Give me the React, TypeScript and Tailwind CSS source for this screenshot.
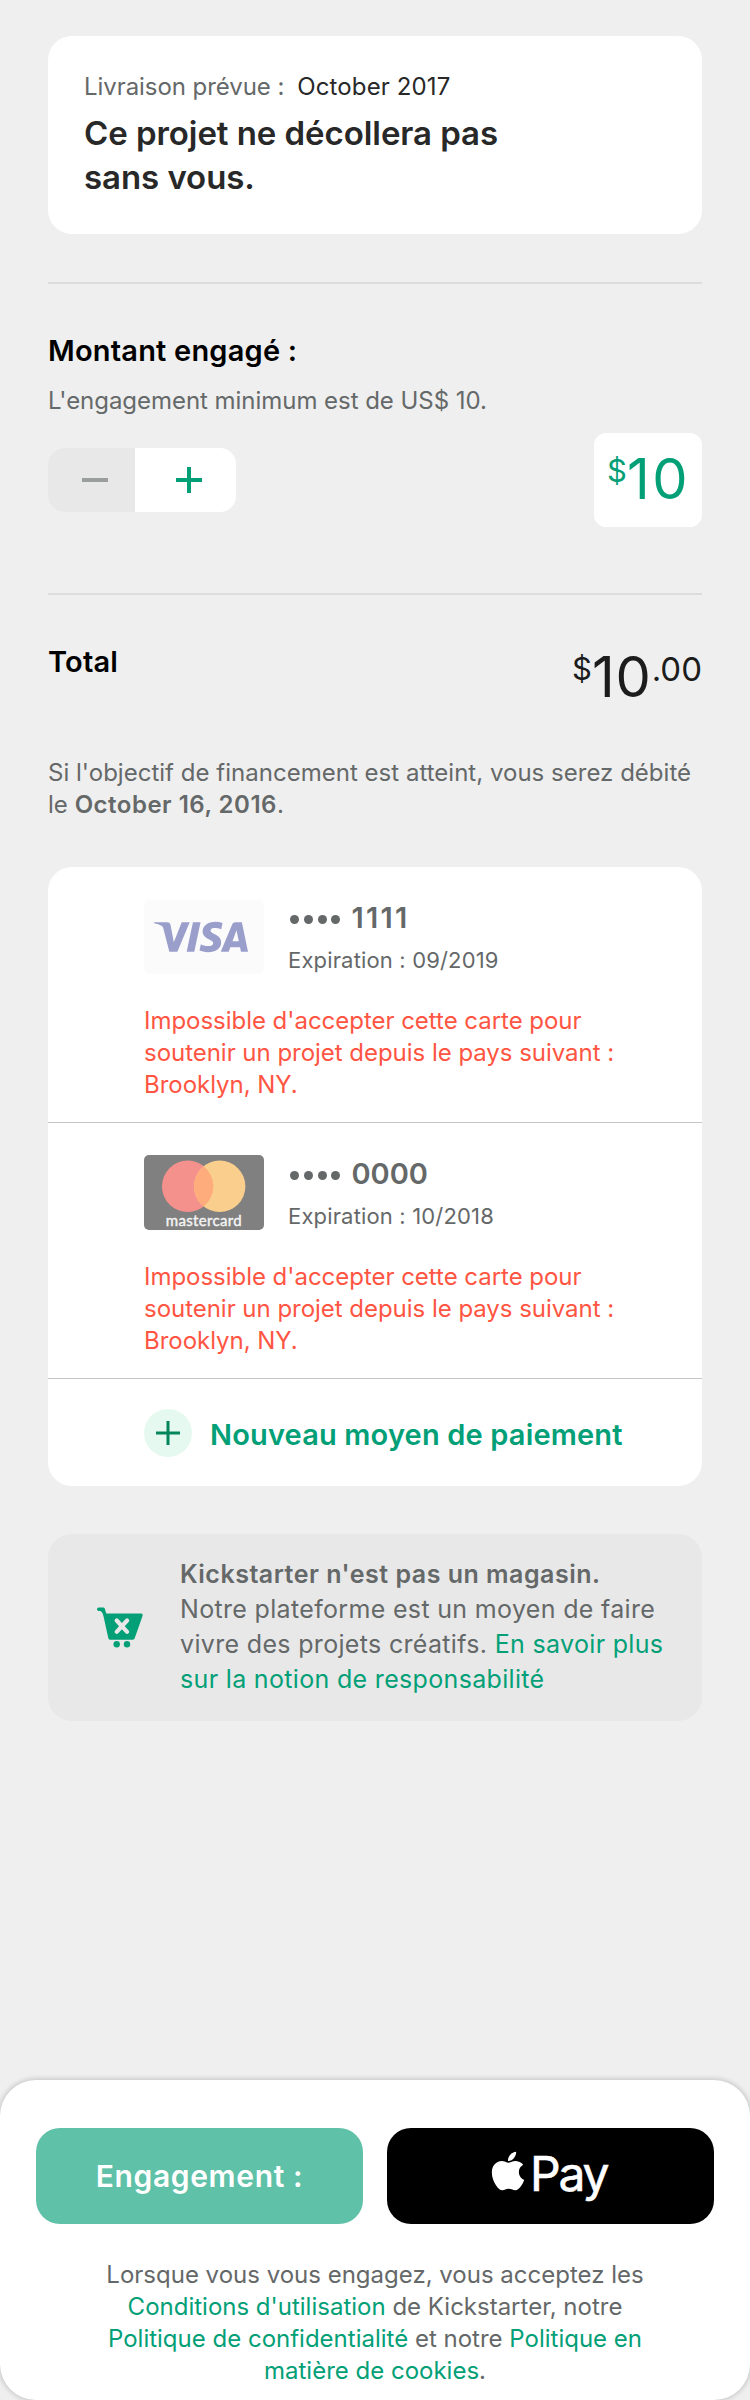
import type { ReactNode } from "react";
import { FaApple } from "react-icons/fa";
import { SiVisa } from "react-icons/si";

function VisaBadge() {
  return (
    <div className="mt-px flex h-[74px] w-[120px] items-center rounded-md bg-[#fbfbfb] pl-[10px]">
      <SiVisa className="size-[94px] text-[#9a9ecb]" />
    </div>
  );
}

function MastercardBadge() {
  return (
    <svg className="h-[75px] w-[120px]" viewBox="0 0 120 75">
      <rect width="120" height="75" rx="5" fill="#808080" />
      <circle cx="43.7" cy="31.3" r="25.7" fill="#f5918d" />
      <circle cx="75.7" cy="31.3" r="25.7" fill="#facf8d" />
      <path d="M59.7 11.2a25.7 25.7 0 0 1 0 40.2a25.7 25.7 0 0 1 0-40.2z" fill="#ffac7d" />
      <text
        x="21.7"
        y="70.5"
        textLength="76"
        fill="#f4f4f4"
        stroke="#f4f4f4"
        strokeWidth="0.4"
        className="font-['Lato',sans-serif] text-[15px]"
      >
        mastercard
      </text>
    </svg>
  );
}

function CartIcon() {
  return (
    <svg className="h-[42px] w-[48px]" viewBox="0 0 48 42" fill="none">
      <path
        d="M2.7 3.3H7.2L9 9.2L14 32H37L45 9.2H9"
        fill="#03a077"
        stroke="#03a077"
        strokeWidth="3.4"
        strokeLinejoin="round"
        strokeLinecap="round"
      />
      <path d="M20.7 14.5l10.4 11.3M31.1 14.5l-10.4 11.3" stroke="#e8e8e8" strokeWidth="4.2" strokeLinecap="round" />
      <circle cx="20.7" cy="38.3" r="3.2" fill="#03a077" />
      <circle cx="31" cy="38.3" r="3.2" fill="#03a077" />
    </svg>
  );
}

function CardRow({ badge, digits, expiry }: { badge: ReactNode; digits: ReactNode; expiry: string }) {
  return (
    <li className="h-64 border-b border-[#c6c6c6] pl-24">
      <div className="flex h-[109px] pt-[32px]">
        {badge}
        <div className="ml-6 text-[#656868]">
          <p className="flex h-[38px] items-center text-[29px] font-semibold leading-[38px]">
            <span className="mr-[11px] flex gap-[4.8px] pl-[2px] pt-[3px]">
              <i className="size-[9px] rounded-full bg-[#656868]" />
              <i className="size-[9px] rounded-full bg-[#656868]" />
              <i className="size-[9px] rounded-full bg-[#656868]" />
              <i className="size-[9px] rounded-full bg-[#656868]" />
            </span>
            {digits}
          </p>
          <p className="mt-[7px] text-[22px] leading-[32px] tracking-[0.16px]">Expiration : {expiry}</p>
        </div>
      </div>
      <p className="mt-[29px] text-[24px] leading-8 tracking-[-0.03px] text-[#ff5542]">
        Impossible d'accepter cette carte pour
        <br />
        soutenir un projet depuis le pays suivant :
        <br />
        Brooklyn, NY.
      </p>
    </li>
  );
}

export default function App() {
  return (
    <div className="flex h-[2400px] w-[750px] flex-col bg-[#efefef] font-['Inter',sans-serif]">
      <main className="flex flex-1 flex-col px-12 pt-9">
        <section className="h-[198px] rounded-3xl bg-white px-9 pt-[35px]">
          <p className="flex gap-[13px] text-[24px] leading-8">
            <span className="tracking-[-0.06px] text-[#656868]">Livraison prévue :</span>
            <span className="tracking-[0.12px] text-[#282828]">October 2017</span>
          </p>
          <h1 className="mt-[8px] text-[33px] font-semibold leading-[44px] tracking-[-0.06px] text-[#282828]">
            Ce projet ne décollera pas
            <br />
            sans vous.
          </h1>
        </section>

        <hr className="mt-12 border-t-2 border-[#dcdcdc]" />

        <section className="h-[309px] pt-[47px]">
          <h2 className="text-[29px] font-semibold leading-10 tracking-[0.2px] text-black">Montant engagé :</h2>
          <p className="mt-[14px] text-[24px] leading-8 tracking-[-0.04px] text-[#656969]">
            L'engagement minimum est de US$ 10.
          </p>
          <div className="mt-[16px] flex items-center justify-between">
            <div className="flex h-16 w-[188px] overflow-hidden rounded-2xl bg-white">
              <button className="flex w-[87px] items-center bg-[#e8e8e8] pl-[34px]">
                <span className="h-[4px] w-[26px] bg-[#9b9e9e]" />
              </button>
              <button className="pl-[41px]">
                <svg className="size-[26px]" viewBox="0 0 26 26" stroke="#03a077" strokeWidth="4">
                  <path d="M13 0v26M0 13h26" />
                </svg>
              </button>
            </div>
            <div className="flex h-[94px] w-[108px] items-start rounded-xl bg-white pl-[13px] text-[#03a077]">
              <span className="mt-[19px] text-[31px] leading-[38px]">$</span>
              <span className="mt-[13px] text-[56px] leading-[66px] tracking-[2.5px]">10</span>
            </div>
          </div>
        </section>

        <hr className="border-t-2 border-[#dcdcdc]" />

        <section className="flex h-[162px] justify-between pt-[46px]">
          <h2 className="pt-px text-[29px] font-semibold leading-10 tracking-[0.2px] text-black">Total</h2>
          <p className="flex items-start text-[#1c1c1c]">
            <span className="mt-[9px] text-[31px] leading-[38px]">$</span>
            <span className="mt-[3px] text-[56px] leading-[66px] tracking-[0.8px]">10</span>
            <span className="mt-[9px] text-[33px] leading-[38px]">.00</span>
          </p>
        </section>

        <p className="h-[110px] text-[24px] leading-8 tracking-[0.02px] text-[#656868]">
          Si l'objectif de financement est atteint, vous serez débité
          <br />
          le <b className="font-semibold tracking-[0.5px]">October 16, 2016</b>.
        </p>

        <ul className="h-[619px] overflow-hidden rounded-3xl bg-white">
          <CardRow
            badge={<VisaBadge />}
            digits={<span className="tracking-[2.3px]">1111</span>}
            expiry="09/2019"
          />
          <CardRow badge={<MastercardBadge />} digits={<span>0000</span>} expiry="10/2018" />
          <li className="flex h-[107px] items-center pl-24">
            <span className="flex size-12 items-center justify-center rounded-full bg-[#e6f9f1]">
              <svg className="size-6" viewBox="0 0 24 24" stroke="#03855c" strokeWidth="3">
                <path d="M12 0v24M0 12h24" />
              </svg>
            </span>
            <span className="ml-[18px] pt-[4px] text-[29px] font-semibold leading-10 tracking-[0.16px] text-[#03a077]">
              Nouveau moyen de paiement
            </span>
          </li>
        </ul>

        <aside className="mt-12 flex h-[187px] rounded-3xl bg-[#e8e8e8] pt-[23px] text-[25px] leading-[35px] tracking-[0.33px] text-[#656868]">
          <div className="mt-[49px] ml-12 w-[84px]">
            <CartIcon />
          </div>
          <p>
            <b className="font-semibold tracking-[0.5px]">Kickstarter n'est pas un magasin.</b>
            <br />
            Notre plateforme est un moyen de faire
            <br />
            vivre des projets créatifs. <a className="text-[#03a077]">En savoir plus</a>
            <br />
            <a className="text-[#03a077]">sur la notion de responsabilité</a>
          </p>
        </aside>
      </main>

      <footer className="h-[320px] rounded-[36px] bg-white px-9 pt-12 shadow-[0_0_4px_2px_rgba(0,0,0,0.14)]">
        <div className="grid h-24 grid-cols-2 gap-6">
          <button className="rounded-3xl bg-[#5fc1a8] text-[30px] font-semibold tracking-[0.65px] text-white">
            Engagement :
          </button>
          <button className="flex rounded-3xl bg-black text-white">
            <FaApple className="mt-[21px] ml-[99px] size-[44px]" />
            <span className="mt-[14px] text-[48px] leading-[64px] tracking-[-2.2px] [-webkit-text-stroke:0.6px_white]">
              Pay
            </span>
          </button>
        </div>
        <p className="mt-[35px] text-center text-[24px] leading-8 text-[#656868]">
          Lorsque vous vous engagez, vous acceptez les
          <br />
          <a className="text-[#03a077]">Conditions d'utilisation</a> de Kickstarter, notre
          <br />
          <a className="text-[#03a077]">Politique de confidentialité</a> et notre <a className="text-[#03a077]">Politique en</a>
          <br />
          <a className="text-[#03a077]">matière de cookies</a>.
        </p>
      </footer>
    </div>
  );
}
